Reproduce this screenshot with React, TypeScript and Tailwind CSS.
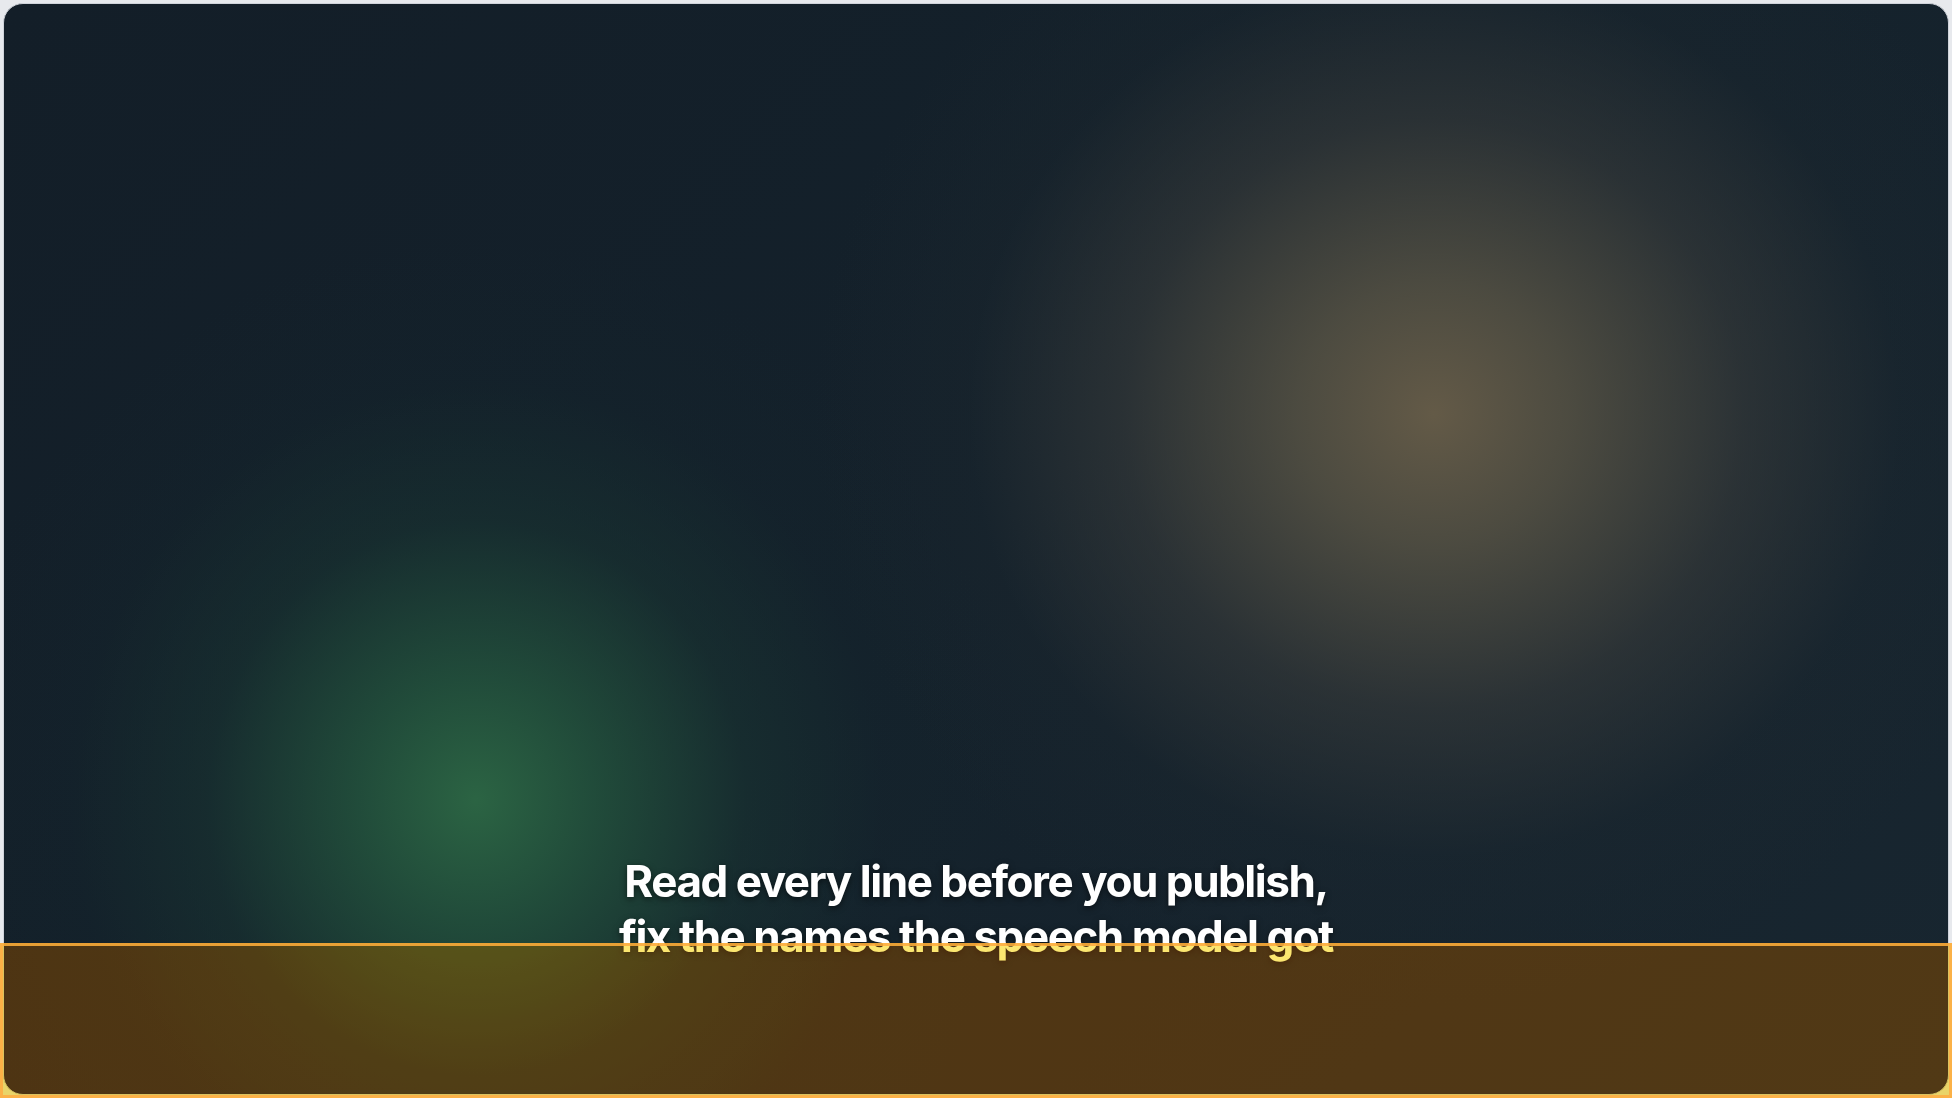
import React from 'react';

const lines = [
  'Read every line before you publish,',
  'fix the names the speech model got',
];

const App: React.FC = () => {
  return (
    <div className="relative h-screen w-full overflow-hidden bg-[#e7e9ed] p-[3px] font-['Inter',sans-serif]">
      {/* video frame */}
      <div className="flex h-full w-full flex-col items-center justify-end overflow-hidden rounded-[20px] border border-[#cfd3da] bg-[#131f29] bg-[radial-gradient(ellipse_620px_590px_at_1430px_410px,rgba(102,92,72,0.97)_0%,rgba(86,82,68,0.85)_22%,rgba(60,62,60,0.55)_50%,rgba(32,42,48,0.25)_75%,rgba(19,31,41,0)_100%),radial-gradient(ellipse_540px_560px_at_472px_796px,rgba(44,102,68,0.97)_0%,rgba(36,86,62,0.8)_22%,rgba(26,58,52,0.45)_50%,rgba(20,40,46,0.2)_75%,rgba(19,31,41,0)_100%),linear-gradient(135deg,#131e28_0%,#14212b_50%,#182630_100%)] pb-[130px]">
        <div className="flex flex-col items-center text-center text-[44px] font-bold leading-[55px] tracking-[-0.033em] text-white [text-shadow:0_2px_6px_rgba(0,0,0,0.55)]">
          {lines.map((line) => (
            <span key={line}>{line}</span>
          ))}
        </div>
      </div>

      {/* selection highlight over the caption zone */}
      <div className="absolute inset-x-0 bottom-0 h-[155px] border-[3px] border-[rgba(253,172,54,0.91)]">
        <div className="absolute inset-0 bg-[#bccc70] mix-blend-multiply" />
        <div className="absolute inset-0 bg-[#3f1a00] mix-blend-plus-lighter" />
      </div>
    </div>
  );
};

export default App;
